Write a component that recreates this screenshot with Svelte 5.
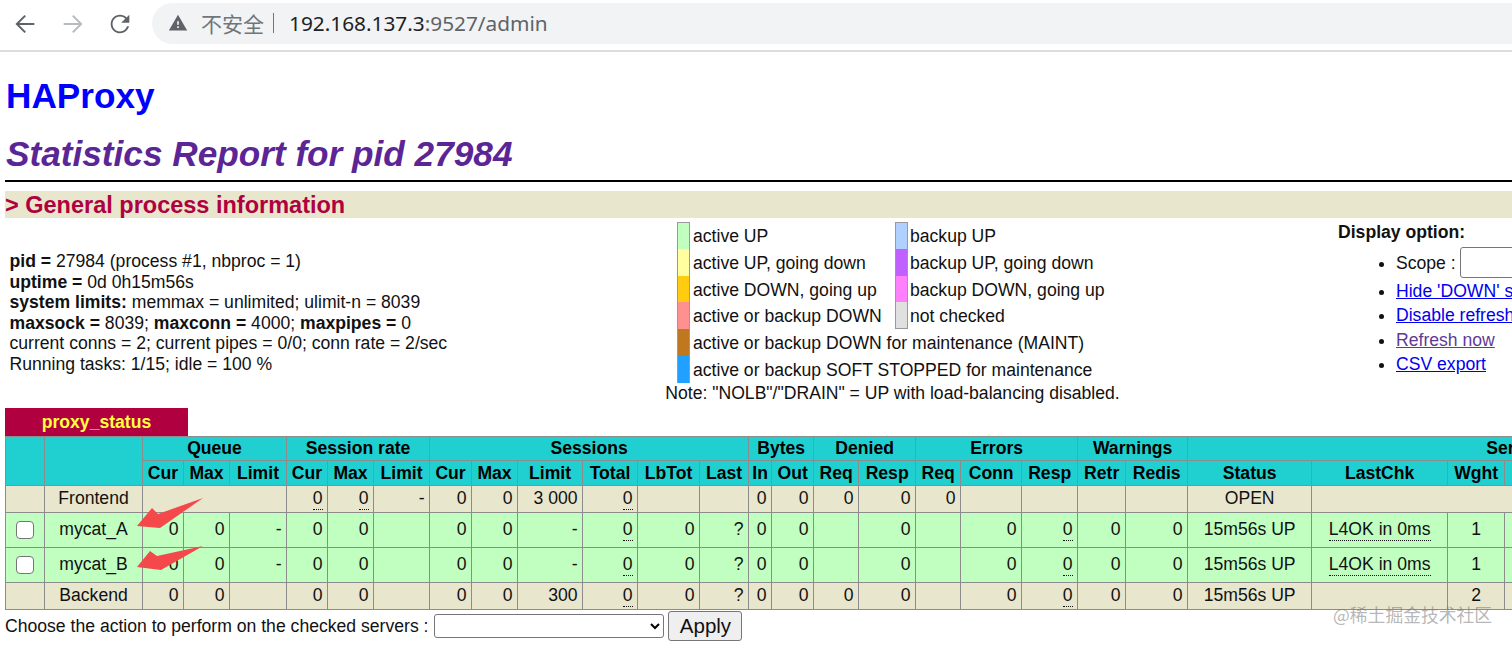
<script>
  const cols = [39,98,41,46,57,41,46,56,42,46,65,55,62,49,23,42,45,57,45,61,56,48,62,124,136,57,45,45,50,50,75,70];
  const groups = [['Queue',3],['Session rate',3],['Sessions',6],['Bytes',2],['Denied',2],['Errors',3],['Warnings',2],['Server',9]];
  const subs = ['Cur','Max','Limit','Cur','Max','Limit','Cur','Max','Limit','Total','LbTot','Last','In','Out','Req','Resp','Req','Conn','Resp','Retr','Redis','Status','LastChk','Wght','Act','Bck','Chk','Dwn','Dwntme','Thrtle'];
  const u = (t) => ({ t, u: true });
  const c = (t) => ({ t, center: true });
  const cu = (t) => ({ t, center: true, u: true });
  const server = (name) => ({
    kind: 'srv', check: true, name,
    cells: ['0','0','-','0','0','','0','0','-',u('0'),'0','?','0','0','','0','','0',u('0'),'0','0',c('15m56s UP'),cu('L4OK in 0ms'),c('1'),c('Y'),c('-'),c('0'),c('0'),c('0s'),c('-')]
  });
  const rows = [
    { kind: 'base', name: 'Frontend', cells: [{ t: '', span: 3 },u('0'),u('0'),'-','0','0','3 000',u('0'),'','','0','0','0','0','0','','','','',c('OPEN'),{ t: '', span: 8 }] },
    server('mycat_A'),
    server('mycat_B'),
    { kind: 'base', name: 'Backend', cells: ['0','0','','0','0','','0','0','300',u('0'),'0','?','0','0','0','0','','0',u('0'),'0','0',c('15m56s UP'),'',c('2'),c('2'),c('0'),c(''),c('0'),c(''),c('')] }
  ];
  const norm = (x) => (typeof x === 'string' ? { t: x } : x);
  const legend = [
    ['#c0ffc0','active UP','#b0d0ff','backup UP'],
    ['#ffffa0','active UP, going down','#c060ff','backup UP, going down'],
    ['#ffcc10','active DOWN, going up','#ff80ff','backup DOWN, going up'],
    ['#ff9090','active or backup DOWN','#e0e0e0','not checked'],
    ['#c07820','active or backup DOWN for maintenance (MAINT)'],
    ['#20a0ff','active or backup SOFT STOPPED for maintenance']
  ];
</script>

<div class="page">
  <header class="chrome">
    <svg class="nav" viewBox="0 0 24 24"><path fill="none" stroke="#5f6368" stroke-width="1.7" d="M20 12H5.5M12.2 4.8 5 12l7.2 7.2"/></svg>
    <svg class="nav" viewBox="0 0 24 24"><path fill="none" stroke="#b8bbbf" stroke-width="1.7" d="M4 12h14.5M11.8 4.8 19 12l-7.2 7.2"/></svg>
    <svg class="nav" viewBox="0 0 24 24"><path fill="#5f6368" d="M17.65 6.35C16.2 4.9 14.21 4 12 4c-4.42 0-7.99 3.58-7.99 8s3.57 8 7.99 8c3.73 0 6.84-2.55 7.73-6h-1.7c-.82 2.55-3.24 4.4-6.03 4.4-3.53 0-6.4-2.87-6.4-6.4s2.87-6.4 6.4-6.4c1.77 0 3.35.73 4.5 1.9L13 11h7V4l-2.35 2.35z"/></svg>
    <div class="omni">
      <svg class="warn" viewBox="0 0 24 24"><path fill="#5f6368" d="M1 21h22L12 2 1 21zm12-3h-2v-2h2v2zm0-4h-2v-4h2v4z"/></svg>
      <span class="insecure">不安全</span>
      <span class="sep"></span>
      <span class="url">192.168.137.3<span class="dim">:9527/admin</span></span>
    </div>
  </header>

  <main class="content">
    <h1>HAProxy</h1>
    <h2>Statistics Report for pid 27984</h2>
    <hr />
    <h3>&gt; General process information</h3>

    <section class="info">
      <div class="proc">
        <p><b>pid =</b> 27984 (process #1, nbproc = 1)</p>
        <p><b>uptime =</b> 0d 0h15m56s</p>
        <p><b>system limits:</b> memmax = unlimited; ulimit-n = 8039</p>
        <p><b>maxsock =</b> 8039; <b>maxconn =</b> 4000; <b>maxpipes =</b> 0</p>
        <p>current conns = 2; current pipes = 0/0; conn rate = 2/sec</p>
        <p>Running tasks: 1/15; idle = 100 %</p>
      </div>

      <div class="legend">
        <div class="legend-grid">
          {#each legend as row, i}
            <span class="swatch" class:top={i === 0} style="background:{row[0]}"></span>
            {#if row.length > 2}
              <span class="lt">{row[1]}</span>
              <span class="swatch" class:top={i === 0} class:bottom={i === 3} style="background:{row[2]}"></span>
              <span class="lt second">{row[3]}</span>
            {:else}
              <span class="lt wide">{row[1]}</span>
            {/if}
          {/each}
        </div>
        <div class="note">Note: "NOLB"/"DRAIN" = UP with load-balancing disabled.</div>
      </div>

      <div class="display">
        <b>Display option:</b>
        <ul>
          <li class="scope">Scope : <input type="text" /></li>
          <li><a href="#a">Hide 'DOWN' servers</a></li>
          <li><a href="#a">Disable refresh</a></li>
          <li><a href="#a" class="visited">Refresh now</a></li>
          <li><a href="#a">CSV export</a></li>
        </ul>
      </div>
    </section>

    <div class="tab">proxy_status</div>
    <table>
      <colgroup>
        {#each cols as w}<col style="width:{w}px" />{/each}
      </colgroup>
      <thead>
        <tr class="h1r">
          <th rowspan="2"></th>
          <th rowspan="2"></th>
          {#each groups as g}<th colspan={g[1]}>{g[0]}</th>{/each}
        </tr>
        <tr class="h2r">
          {#each subs as s}<th>{s}</th>{/each}
        </tr>
      </thead>
      <tbody>
        {#each rows as r}
          <tr class={r.kind}>
            <td class="ctr">{#if r.check}<input class="cb" type="checkbox" />{/if}</td>
            <td class="ctr">{r.name}</td>
            {#each r.cells.map(norm) as cell}
              <td colspan={cell.span || 1} class:ctr={cell.center}>{#if cell.u}<span class="dot">{cell.t}</span>{:else}{cell.t}{/if}</td>
            {/each}
          </tr>
        {/each}
      </tbody>
    </table>

    <div class="actions">
      <span>Choose the action to perform on the checked servers :</span>
      <select><option></option></select>
      <button type="button">Apply</button>
    </div>
  </main>

  <svg class="arrows" viewBox="0 0 1512 645" aria-hidden="true">
    <polygon fill="#f4484a" points="137,526 152,508 158,514 203,498 160,528" />
    <polygon fill="#f4484a" points="137,567 150,551 157,556 203,546 161,570" />
  </svg>
  <div class="mark">@稀土掘金技术社区</div>
</div>

<style>
  :global(body) { margin: 0; background: #fff; }
  .page {
    position: relative;
    width: 1512px;
    height: 645px;
    overflow: hidden;
    font-family: "Liberation Sans", Arial, sans-serif;
    font-size: 17.6px;
    color: #111;
  }
  .chrome {
    display: flex;
    align-items: center;
    height: 50px;
    border-bottom: 2px solid #dcdcdc;
    padding-left: 11px;
    gap: 19.5px;
  }
  .nav { width: 28px; height: 28px; flex: none; margin-top: -2px; }
  .omni {
    display: flex;
    align-items: center;
    flex: 1;
    height: 41px;
    margin-left: -1.5px;
    padding-left: 16px;
    background: #f1f3f4;
    border-radius: 21px 0 0 21px;
    margin-top: -4px;
  }
  .warn { width: 20px; height: 20px; flex: none; }
  .insecure { margin-left: 13px; font-family: "Noto Sans CJK SC", sans-serif; font-size: 21px; color: #70757a; }
  .sep { width: 1px; height: 20px; margin: 0 15px 0 9px; background: #70757a; }
  .url { font-family: "Noto Sans", sans-serif; font-size: 20.8px; color: #202124; }
  .dim { color: #5f6368; }

  .content { padding-left: 5px; }
  h1 { margin: 25px 0 0 1px; font-size: 35.2px; line-height: 38px; color: #0000ff; font-weight: bold; }
  h2 { margin: 19px 0 0 1px; font-size: 35.2px; line-height: 40px; color: #5b2596; font-style: italic; font-weight: bold; }
  hr { margin: 6px 0 0; border: 0; height: 2px; background: #000; }
  h3 { margin: 9px 0 0; height: 27px; line-height: 28px; font-size: 23.5px; font-weight: bold; color: #b00040; background: #e8e6cd; }

  .info { display: flex; height: 190px; }
  .proc { width: 655px; padding: 33px 0 0 4.5px; box-sizing: border-box; flex: none; margin-right: 5px; }
  .proc p { margin: 0; line-height: 20.5px; }
  .legend { width: 455px; flex: none; padding-top: 4px; }
  .legend-grid { display: grid; grid-template-columns: 13px 205px 13px auto; grid-auto-rows: 26.8px; margin-left: 12px; }
  .swatch { border: solid #999; border-width: 0 1px; box-sizing: content-box; width: 11px; }
  .swatch.top { border-top: 1px solid #999; }
  .swatch.bottom { border-bottom: 1px solid #999; }
  .lt { padding: 0 0 0 3px; line-height: 28px; white-space: nowrap; }
  .lt.second { padding-left: 2px; }
  .wide { grid-column: 2 / span 3; }
  .note { line-height: 20px; white-space: nowrap; text-align: center; }
  .display { margin-left: 218px; padding-top: 4px; flex: none; width: 200px; }
  .display > b { display: block; line-height: 20px; }
  .display ul { margin: 5px 0 0; padding: 0 0 0 58px; }
  .display li { line-height: 24.4px; white-space: nowrap; }
  .display li.scope { line-height: 32px; height: 31px; margin-bottom: 1px; }
  .scope input { width: 120px; height: 31px; box-sizing: border-box; margin: 0 0 0 -1px; border: 1px solid #767676; border-radius: 3px; padding: 0; vertical-align: top; }
  a { color: #0000ee; }
  a.visited { color: #5f3a96; }

  .tab {
    width: 183px;
    height: 28px;
    line-height: 28px;
    background: #b00040;
    color: #ffff40;
    font-weight: bold;
    text-align: center;
  }
  table { border-collapse: collapse; table-layout: fixed; width: 1834px; }
  th, td { border: 1px solid #8c8c8c; padding: 0 4.5px 1px 0; overflow: hidden; white-space: nowrap; }
  th { background: #20d0d0; color: #000; font-weight: bold; text-align: center; padding: 0; }
  td { text-align: right; }
  td.ctr { text-align: center; padding: 0 0 1px; }
  .h1r { height: 24px; }
  .h2r { height: 25px; }
  tr.base { height: 27px; }
  tr.base td { background: #e8e6cd; }
  tr.srv { height: 35px; }
  tr.srv td { background: #c0ffc0; }
  .dot { border-bottom: 1px dotted #111; padding-bottom: 1px; }
  .cb { appearance: none; width: 18px; height: 18px; margin: 0; vertical-align: middle; background: #fff; border: 1.5px solid #767676; border-radius: 4px; }

  .actions { display: flex; align-items: center; height: 32px; margin-top: 0; }
  .actions select { width: 230px; height: 24px; margin-left: 6px; background: #fff; border: 1px solid #767676; border-radius: 3px; font-size: 16px; }
  .actions button { width: 74px; height: 30px; margin-left: 4px; padding: 0; font: inherit; font-size: 20.5px; color: #111; background: #efefef; border: 1px solid #767676; border-radius: 3px; }

  .arrows { position: absolute; inset: 0; width: 1512px; height: 645px; pointer-events: none; }
  .mark {
    position: absolute;
    left: 1333px;
    top: 602px;
    font-family: "Noto Sans CJK SC", sans-serif;
    font-size: 17.8px;
    line-height: 24px;
    color: rgba(120, 120, 120, 0.55);
    white-space: nowrap;
  }
</style>
